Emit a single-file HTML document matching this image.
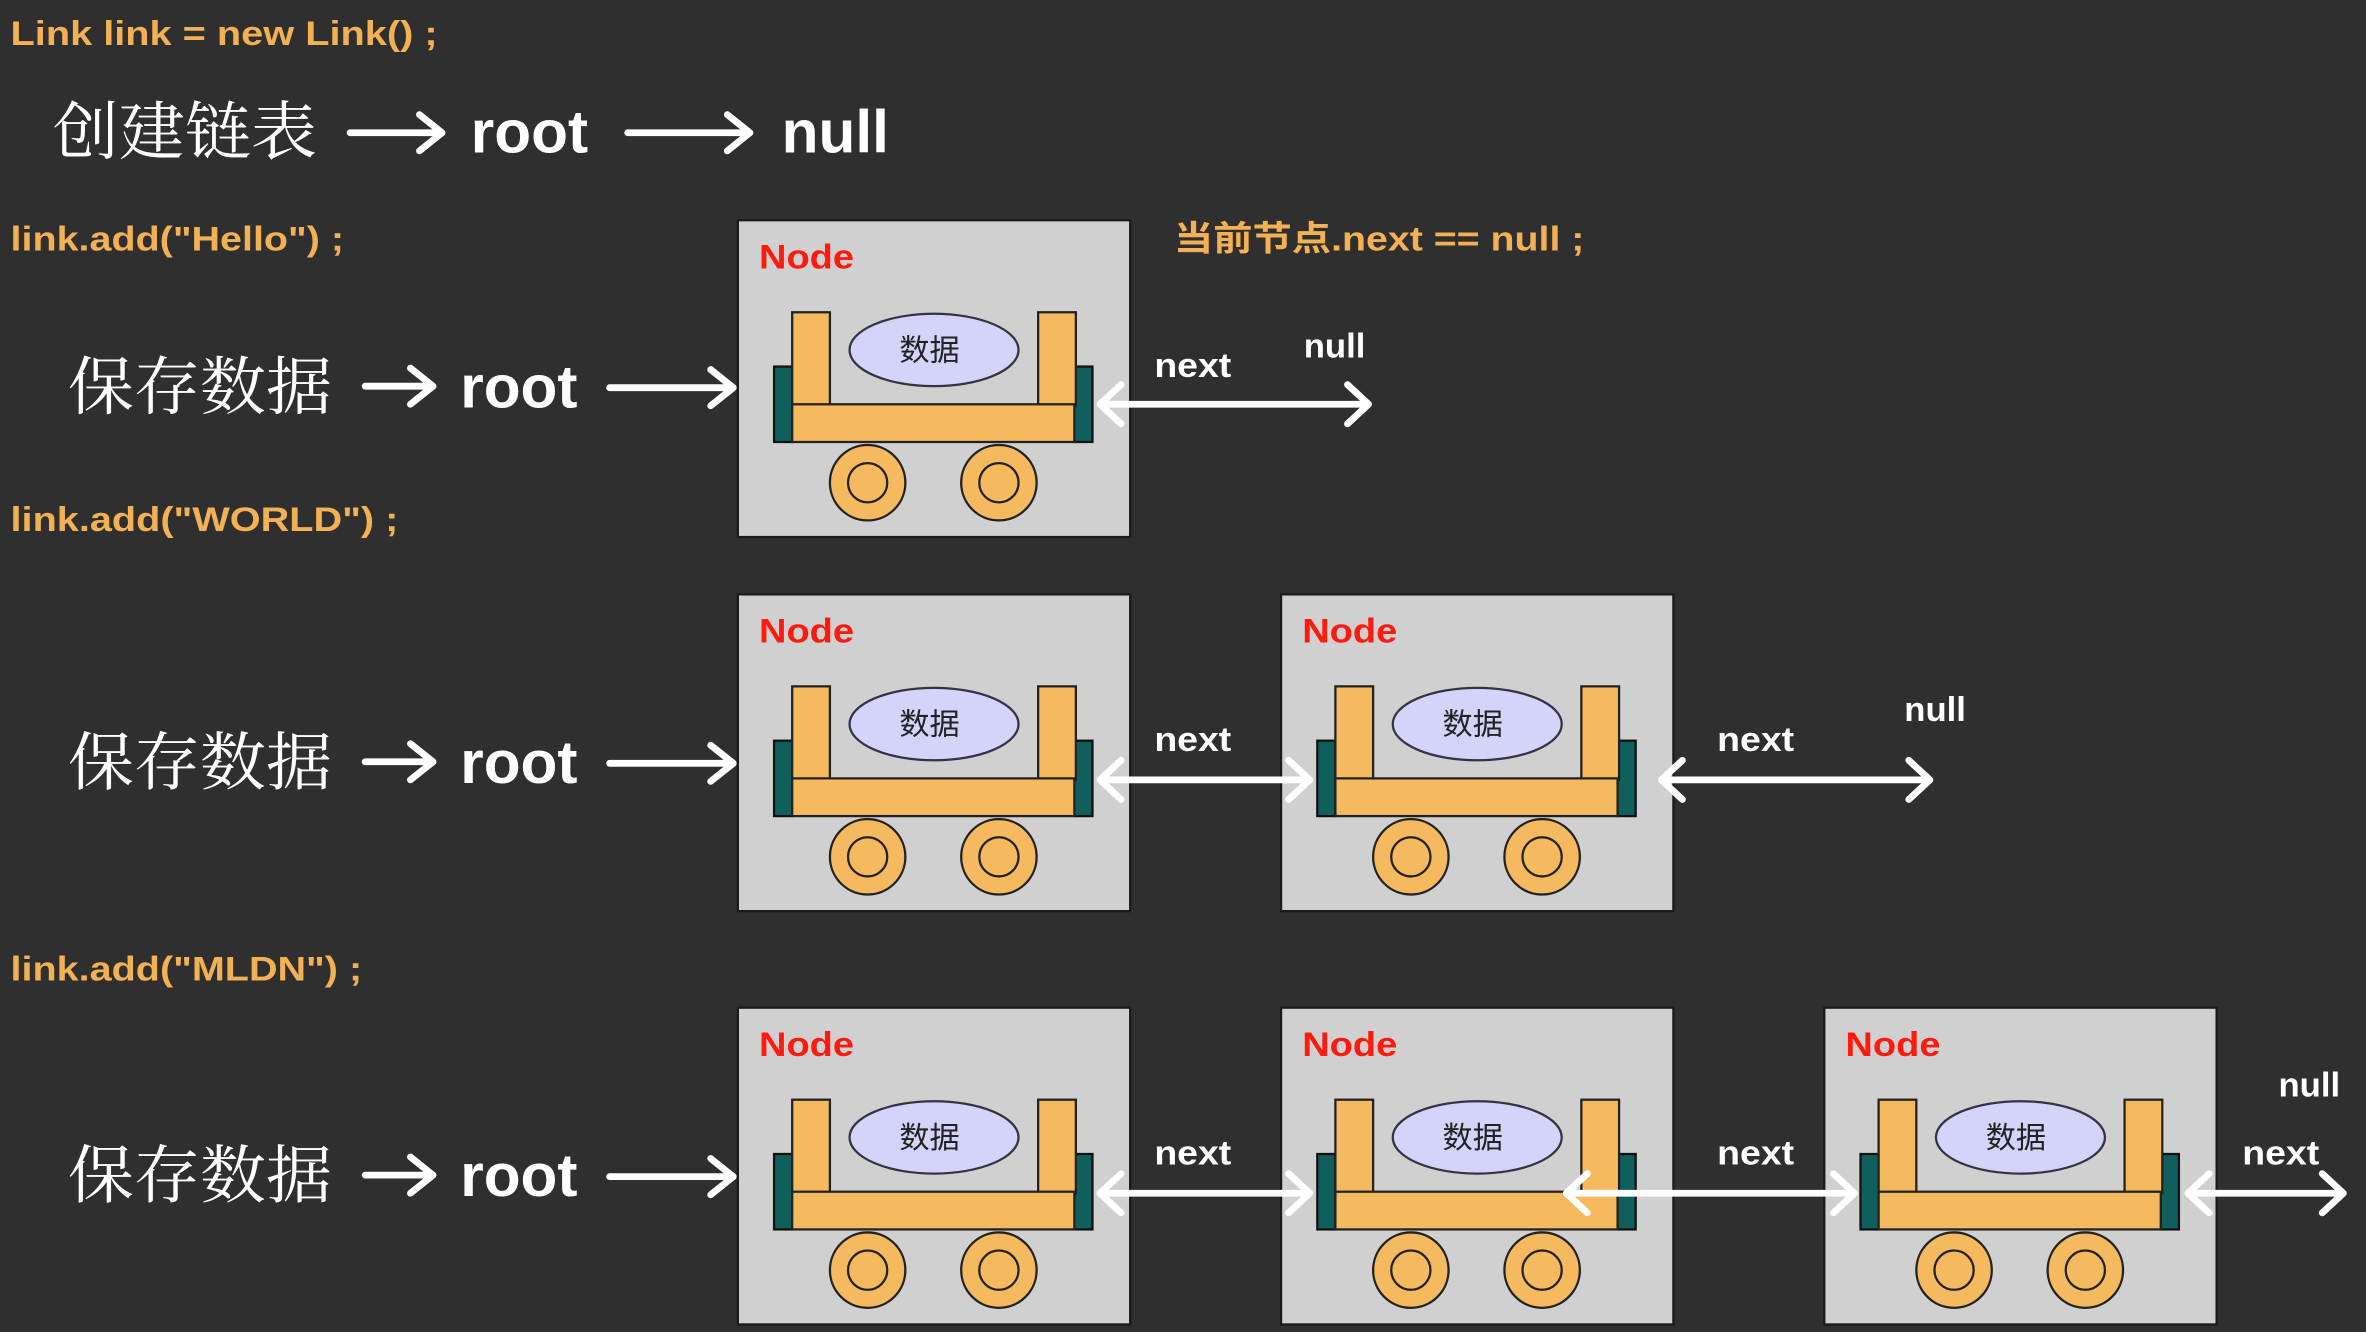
<!DOCTYPE html>
<html><head><meta charset="utf-8"><style>
html,body{margin:0;padding:0;background:#2f2f2f;overflow:hidden}
svg{display:block}
.o{fill:#f2b154;font-family:"Liberation Sans","Noto Sans CJK SC",sans-serif;font-size:23px;font-weight:bold}
.cj{fill:#fff;font-family:"Liberation Serif","Noto Serif CJK SC",serif;font-size:42px}
.en{fill:#fff;font-family:"Liberation Sans",sans-serif;font-size:40px;font-weight:bold}
.sm{fill:#fff;font-family:"Liberation Sans",sans-serif;font-size:23px;font-weight:bold}
.nd{fill:#ff1a10;font-family:"Liberation Sans",sans-serif;font-size:23px;font-weight:bold}
.dt{fill:#222;font-family:"Liberation Sans","Noto Sans CJK SC",sans-serif;font-size:20px}
.ar{stroke:#fff;stroke-width:4.5;fill:none;stroke-linecap:round;stroke-linejoin:round}
.post{fill:#f5b95f;stroke:#222;stroke-width:1.5}
.tl{fill:#0f5f5d;stroke:#111;stroke-width:1.5}
</style></head><body>
<svg width="2366" height="1332" viewBox="0 0 1568 883" preserveAspectRatio="none" xmlns="http://www.w3.org/2000/svg">
<rect width="1568" height="883" fill="#2f2f2f"/>

<text class="o" x="7" y="30" textLength="283" lengthAdjust="spacingAndGlyphs">Link link = new Link() ;</text>
<text class="cj" x="35" y="102" textLength="175" lengthAdjust="spacingAndGlyphs">创建链表</text>
<path class="ar" d="M232 88H292M278 76L293 88L278 100"/>
<text class="en" x="312" y="101">root</text>
<path class="ar" d="M416 88H496M482 76L497 88L482 100"/>
<text class="en" x="518" y="101">null</text>

<text class="o" x="7" y="166" textLength="221" lengthAdjust="spacingAndGlyphs">link.add("Hello") ;</text>
<text class="o" x="778" y="166" textLength="272" lengthAdjust="spacingAndGlyphs">当前节点.next == null ;</text>
<text class="o" x="7" y="352" textLength="257" lengthAdjust="spacingAndGlyphs">link.add("WORLD") ;</text>
<text class="o" x="7" y="650" textLength="233" lengthAdjust="spacingAndGlyphs">link.add("MLDN") ;</text>

<text class="cj" x="45" y="271" textLength="175" lengthAdjust="spacingAndGlyphs">保存数据</text>
<path class="ar" d="M242 256H286M272 244L287 256L272 268"/>
<text class="en" x="305" y="270">root</text>
<path class="ar" d="M404 257H485M471 245L486 257L471 269"/>

<text class="cj" x="45" y="520" textLength="175" lengthAdjust="spacingAndGlyphs">保存数据</text>
<path class="ar" d="M242 505H286M272 493L287 505L272 517"/>
<text class="en" x="305" y="519">root</text>
<path class="ar" d="M404 506H485M471 494L486 506L471 518"/>

<text class="cj" x="45" y="794" textLength="175" lengthAdjust="spacingAndGlyphs">保存数据</text>
<path class="ar" d="M242 779H286M272 767L287 779L272 791"/>
<text class="en" x="305" y="793">root</text>
<path class="ar" d="M404 780H485M471 768L486 780L471 792"/>

<g transform="translate(489,146)">
<rect x="0" y="0" width="260" height="210" fill="#d0d0d0" stroke="#1a1a1a" stroke-width="1.5"/>
<text class="nd" x="14" y="32" textLength="63" lengthAdjust="spacingAndGlyphs">Node</text>
<rect class="tl" x="24" y="97" width="12" height="50"/><rect class="tl" x="223" y="97" width="12" height="50"/>
<rect class="post" x="36" y="61" width="25" height="62"/><rect class="post" x="199" y="61" width="25" height="62"/>
<rect class="post" x="36" y="122" width="187" height="25"/>
<ellipse cx="130" cy="86" rx="56" ry="24" fill="#d4d4fa" stroke="#334" stroke-width="1.5"/>
<text class="dt" x="127" y="93" text-anchor="middle">数据</text>
<circle class="post" cx="86" cy="174" r="25"/><circle class="post" cx="86" cy="174" r="13"/>
<circle class="post" cx="173" cy="174" r="25"/><circle class="post" cx="173" cy="174" r="13"/>
</g>
<g transform="translate(489,394)">
<rect x="0" y="0" width="260" height="210" fill="#d0d0d0" stroke="#1a1a1a" stroke-width="1.5"/>
<text class="nd" x="14" y="32" textLength="63" lengthAdjust="spacingAndGlyphs">Node</text>
<rect class="tl" x="24" y="97" width="12" height="50"/><rect class="tl" x="223" y="97" width="12" height="50"/>
<rect class="post" x="36" y="61" width="25" height="62"/><rect class="post" x="199" y="61" width="25" height="62"/>
<rect class="post" x="36" y="122" width="187" height="25"/>
<ellipse cx="130" cy="86" rx="56" ry="24" fill="#d4d4fa" stroke="#334" stroke-width="1.5"/>
<text class="dt" x="127" y="93" text-anchor="middle">数据</text>
<circle class="post" cx="86" cy="174" r="25"/><circle class="post" cx="86" cy="174" r="13"/>
<circle class="post" cx="173" cy="174" r="25"/><circle class="post" cx="173" cy="174" r="13"/>
</g>
<g transform="translate(849,394)">
<rect x="0" y="0" width="260" height="210" fill="#d0d0d0" stroke="#1a1a1a" stroke-width="1.5"/>
<text class="nd" x="14" y="32" textLength="63" lengthAdjust="spacingAndGlyphs">Node</text>
<rect class="tl" x="24" y="97" width="12" height="50"/><rect class="tl" x="223" y="97" width="12" height="50"/>
<rect class="post" x="36" y="61" width="25" height="62"/><rect class="post" x="199" y="61" width="25" height="62"/>
<rect class="post" x="36" y="122" width="187" height="25"/>
<ellipse cx="130" cy="86" rx="56" ry="24" fill="#d4d4fa" stroke="#334" stroke-width="1.5"/>
<text class="dt" x="127" y="93" text-anchor="middle">数据</text>
<circle class="post" cx="86" cy="174" r="25"/><circle class="post" cx="86" cy="174" r="13"/>
<circle class="post" cx="173" cy="174" r="25"/><circle class="post" cx="173" cy="174" r="13"/>
</g>
<g transform="translate(489,668)">
<rect x="0" y="0" width="260" height="210" fill="#d0d0d0" stroke="#1a1a1a" stroke-width="1.5"/>
<text class="nd" x="14" y="32" textLength="63" lengthAdjust="spacingAndGlyphs">Node</text>
<rect class="tl" x="24" y="97" width="12" height="50"/><rect class="tl" x="223" y="97" width="12" height="50"/>
<rect class="post" x="36" y="61" width="25" height="62"/><rect class="post" x="199" y="61" width="25" height="62"/>
<rect class="post" x="36" y="122" width="187" height="25"/>
<ellipse cx="130" cy="86" rx="56" ry="24" fill="#d4d4fa" stroke="#334" stroke-width="1.5"/>
<text class="dt" x="127" y="93" text-anchor="middle">数据</text>
<circle class="post" cx="86" cy="174" r="25"/><circle class="post" cx="86" cy="174" r="13"/>
<circle class="post" cx="173" cy="174" r="25"/><circle class="post" cx="173" cy="174" r="13"/>
</g>
<g transform="translate(849,668)">
<rect x="0" y="0" width="260" height="210" fill="#d0d0d0" stroke="#1a1a1a" stroke-width="1.5"/>
<text class="nd" x="14" y="32" textLength="63" lengthAdjust="spacingAndGlyphs">Node</text>
<rect class="tl" x="24" y="97" width="12" height="50"/><rect class="tl" x="223" y="97" width="12" height="50"/>
<rect class="post" x="36" y="61" width="25" height="62"/><rect class="post" x="199" y="61" width="25" height="62"/>
<rect class="post" x="36" y="122" width="187" height="25"/>
<ellipse cx="130" cy="86" rx="56" ry="24" fill="#d4d4fa" stroke="#334" stroke-width="1.5"/>
<text class="dt" x="127" y="93" text-anchor="middle">数据</text>
<circle class="post" cx="86" cy="174" r="25"/><circle class="post" cx="86" cy="174" r="13"/>
<circle class="post" cx="173" cy="174" r="25"/><circle class="post" cx="173" cy="174" r="13"/>
</g>
<g transform="translate(1209,668)">
<rect x="0" y="0" width="260" height="210" fill="#d0d0d0" stroke="#1a1a1a" stroke-width="1.5"/>
<text class="nd" x="14" y="32" textLength="63" lengthAdjust="spacingAndGlyphs">Node</text>
<rect class="tl" x="24" y="97" width="12" height="50"/><rect class="tl" x="223" y="97" width="12" height="50"/>
<rect class="post" x="36" y="61" width="25" height="62"/><rect class="post" x="199" y="61" width="25" height="62"/>
<rect class="post" x="36" y="122" width="187" height="25"/>
<ellipse cx="130" cy="86" rx="56" ry="24" fill="#d4d4fa" stroke="#334" stroke-width="1.5"/>
<text class="dt" x="127" y="93" text-anchor="middle">数据</text>
<circle class="post" cx="86" cy="174" r="25"/><circle class="post" cx="86" cy="174" r="13"/>
<circle class="post" cx="173" cy="174" r="25"/><circle class="post" cx="173" cy="174" r="13"/>
</g>

<path class="ar" d="M729 268H907M743 255L729 268L743 281M893 255L907 268L893 281"/>
<text class="sm" x="765" y="250" textLength="51" lengthAdjust="spacingAndGlyphs">next</text>
<text class="sm" x="864" y="237">null</text>

<path class="ar" d="M729 517H868M743 504L729 517L743 530M854 504L868 517L854 530"/>
<text class="sm" x="765" y="498" textLength="51" lengthAdjust="spacingAndGlyphs">next</text>
<path class="ar" d="M1101 517H1279M1115 504L1101 517L1115 530M1265 504L1279 517L1265 530"/>
<text class="sm" x="1138" y="498" textLength="51" lengthAdjust="spacingAndGlyphs">next</text>
<text class="sm" x="1262" y="478">null</text>

<path class="ar" d="M729 791H868M743 778L729 791L743 804M854 778L868 791L854 804"/>
<text class="sm" x="765" y="772" textLength="51" lengthAdjust="spacingAndGlyphs">next</text>
<path class="ar" d="M1038 791H1229M1052 778L1038 791L1052 804M1215 778L1229 791L1215 804"/>
<text class="sm" x="1138" y="772" textLength="51" lengthAdjust="spacingAndGlyphs">next</text>
<path class="ar" d="M1450 791H1553M1464 778L1450 791L1464 804M1539 778L1553 791L1539 804"/>
<text class="sm" x="1486" y="772" textLength="51" lengthAdjust="spacingAndGlyphs">next</text>
<text class="sm" x="1510" y="727">null</text>
</svg>
</body></html>
